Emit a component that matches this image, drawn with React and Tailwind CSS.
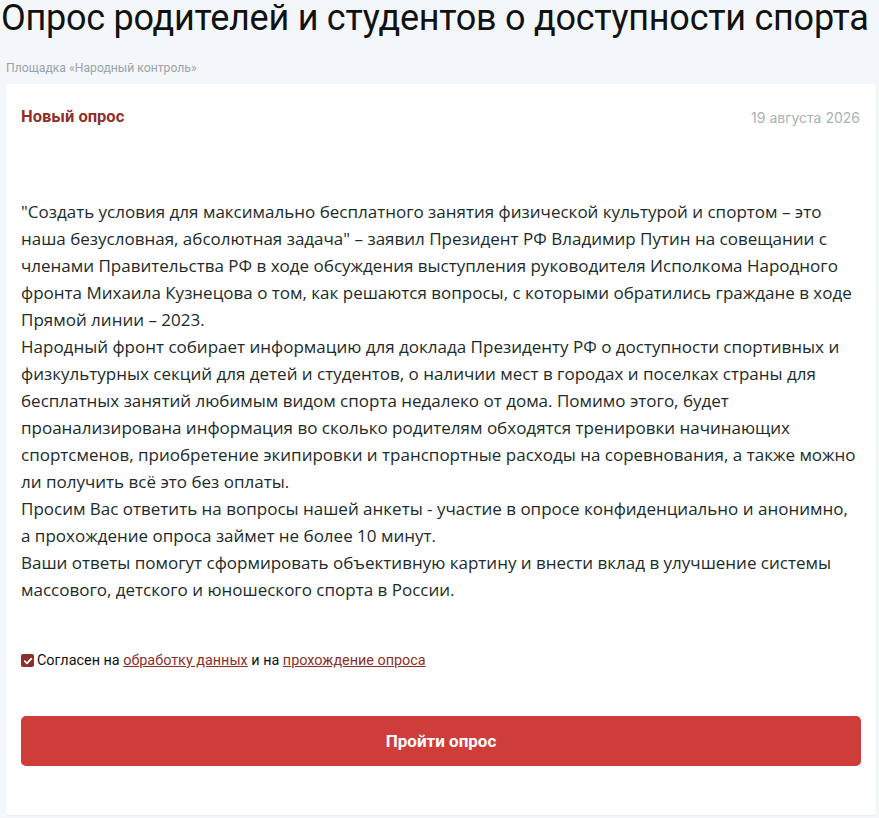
export default function App() {
  return (
    <div className="min-h-[818px] bg-[#f3f7f9] font-['Roboto',sans-serif]">
      <h1 className="text-[36px] leading-[37px] tracking-[-0.25px] text-[#111] pl-[1px] whitespace-nowrap">
        Опрос родителей и студентов о доступности спорта
      </h1>
      <div className="pl-[6px] pt-[24px] text-[12.2px] leading-[14px] text-[#9aa3a8]">
        Площадка «Народный контроль»
      </div>
      <div className="mx-[6px] mt-[9px] mr-[3px] bg-white rounded-[4px] shadow-[0_1px_2px_rgba(0,0,0,0.06)] px-[15px] pt-[21px] pb-[49px]">
        <div className="flex justify-between items-center">
          <div className="text-[16.5px] font-bold text-[#8e2f2a]">Новый опрос</div>
          <div className="text-[14px] text-[#a7b4b3] font-['Inter',sans-serif] pr-[1px]">19 августа 2026</div>
        </div>
        <div className="mt-[68px] font-['Open_Sans',sans-serif] text-[17px] leading-[27px] text-[#1c2b2b]">
          <p>"Создать условия для максимально бесплатного занятия физической культурой и спортом – это наша безусловная, абсолютная задача" – заявил Президент РФ Владимир Путин на совещании с членами Правительства РФ в ходе обсуждения выступления руководителя Исполкома Народного фронта Михаила Кузнецова о том, как решаются вопросы, с которыми обратились граждане в ходе Прямой линии – 2023.</p>
          <p>Народный фронт собирает информацию для доклада Президенту РФ о доступности спортивных и физкультурных секций для детей и студентов, о наличии мест в городах и поселках страны для бесплатных занятий любимым видом спорта недалеко от дома. Помимо этого, будет проанализирована информация во сколько родителям обходятся тренировки начинающих спортсменов, приобретение экипировки и транспортные расходы на соревнования, а также можно ли получить всё это без оплаты.</p>
          <p>Просим Вас ответить на вопросы нашей анкеты - участие в опросе конфиденциально и анонимно, а прохождение опроса займет не более 10 минут.</p>
          <p>Ваши ответы помогут сформировать объективную картину и внести вклад в улучшение системы массового, детского и юношеского спорта в России.</p>
        </div>
        <label className="mt-[47px] flex items-center gap-[3px] text-[14.4px] text-[#111]">
          <span className="w-[13px] h-[13px] rounded-[2px] bg-[#8e2f2a] flex items-center justify-center">
            <svg width="10" height="10" viewBox="0 0 10 10" fill="none">
              <path d="M1.8 5.2 L4 7.3 L8.3 2.6" stroke="white" strokeWidth="1.8" strokeLinecap="round" strokeLinejoin="round" />
            </svg>
          </span>
          <span>
            Согласен на <a className="text-[#8e2f2a] underline">обработку данных</a> и на{" "}
            <a className="text-[#8e2f2a] underline">прохождение опроса</a>
          </span>
        </label>
        <button className="mt-[45px] w-full h-[50px] rounded-[5px] bg-[#cf3d3a] text-white text-[17px] font-bold">
          Пройти опрос
        </button>
      </div>
    </div>
  );
}
